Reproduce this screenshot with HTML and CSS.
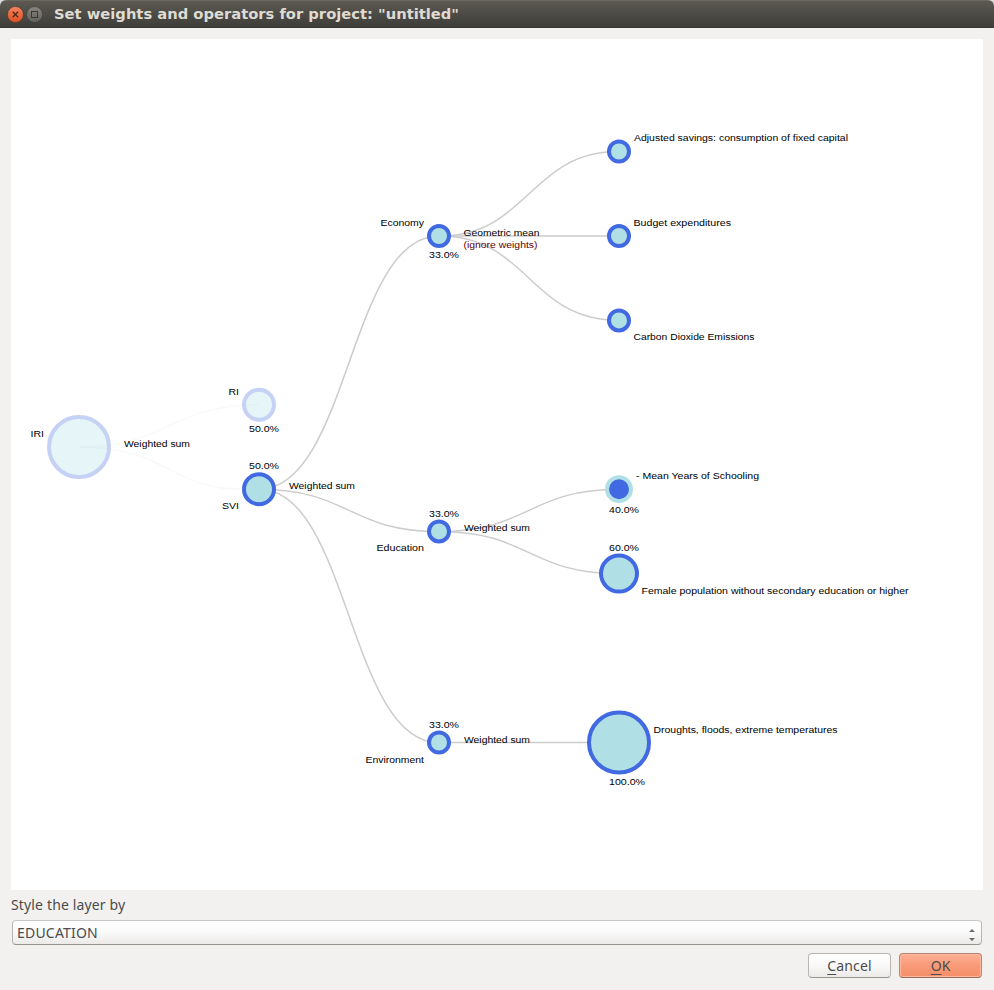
FILE: index.html
```html
<!DOCTYPE html>
<html lang="en">
<head>
<meta charset="utf-8">
<title>Set weights and operators</title>
<link rel="stylesheet" href="styles.css">
</head>
<body>
<div class="dialog">
  <header class="titlebar">
    <svg class="controls" width="40" height="20" viewBox="0 0 40 20" aria-hidden="true">
      <defs>
        <linearGradient id="close" x1="0" y1="0" x2="0" y2="1"><stop offset="0" stop-color="#f58562"/><stop offset="1" stop-color="#e0501f"/></linearGradient>
        <linearGradient id="max" x1="0" y1="0" x2="0" y2="1"><stop offset="0" stop-color="#87857d"/><stop offset="1" stop-color="#62605a"/></linearGradient>
      </defs>
      <circle cx="10.4" cy="10.5" r="8" fill="url(#close)" stroke="#393732" stroke-width=".6"/>
      <path d="M7.7 7.8l5.4 5.4M13.1 7.8l-5.4 5.4" fill="none" stroke="#4b2a1c" stroke-width="1.3"/>
      <circle cx="29.6" cy="10.5" r="8" fill="url(#max)" stroke="#393732" stroke-width=".6"/>
      <rect x="26.5" y="7.5" width="6" height="6" fill="none" stroke="#393833"/>
    </svg>
    <svg class="title" width="420" height="24"><text x="0" y="15" textLength="405" lengthAdjust="spacingAndGlyphs">Set weights and operators for project: "untitled"</text></svg>
  </header>
  <main class="canvas">
    <svg class="tree" width="972" height="851" viewBox="11 39 972 851">
      <g class="links">
        <path d="M259 489.3C349 489.3 349 236 439 236"/>
        <path d="M259 489.3C349 489.3 349 531.5 439 531.5"/>
        <path d="M259 489.3C349 489.3 349 742.6 439 742.6"/>
        <path d="M439 236C529 236 529 151.6 619 151.6"/>
        <path d="M439 236H619"/>
        <path d="M439 236C529 236 529 320.4 619 320.4"/>
        <path d="M439 531.5C529 531.5 529 489.3 619 489.3"/>
        <path d="M439 531.5C529 531.5 529 573.7 619 573.7"/>
        <path d="M439 742.6H619"/>
      </g>
      <g class="nodes">
        <circle class="faded" cx="79" cy="447" r="30"/>
        <circle class="faded" cx="259" cy="404.8" r="15"/>
        <circle cx="259" cy="489.2" r="15"/>
        <circle cx="439" cy="236" r="10"/>
        <circle cx="439" cy="531.4" r="10"/>
        <circle cx="439" cy="742.5" r="10"/>
        <circle cx="619" cy="151.5" r="10"/>
        <circle cx="619" cy="236" r="10"/>
        <circle cx="619" cy="320.4" r="10"/>
        <circle class="inverted" cx="619" cy="489.2" r="12"/>
        <circle cx="619" cy="573.6" r="18"/>
        <circle cx="619" cy="742.5" r="30"/>
      </g>
      <g class="links ghost">
        <path d="M79 447C169 447 169 404.8 259 404.8"/>
        <path d="M79 447C169 447 169 489.2 243 489.2"/>
      </g>
      <g class="labels">
        <text x="30.5" y="437" textLength="13.5" lengthAdjust="spacingAndGlyphs">IRI</text>
        <text x="124" y="447" textLength="66" lengthAdjust="spacingAndGlyphs">Weighted sum</text>
        <text x="228.5" y="395" textLength="10.5" lengthAdjust="spacingAndGlyphs">RI</text>
        <text x="249" y="432" textLength="30" lengthAdjust="spacingAndGlyphs">50.0%</text>
        <text x="249" y="469" textLength="30" lengthAdjust="spacingAndGlyphs">50.0%</text>
        <text x="222" y="509" textLength="17" lengthAdjust="spacingAndGlyphs">SVI</text>
        <text x="289" y="489" textLength="66" lengthAdjust="spacingAndGlyphs">Weighted sum</text>
        <text x="380.5" y="226" textLength="43.5" lengthAdjust="spacingAndGlyphs">Economy</text>
        <text x="429" y="258" textLength="30" lengthAdjust="spacingAndGlyphs">33.0%</text>
        <text x="463.5" y="236" textLength="76" lengthAdjust="spacingAndGlyphs">Geometric mean</text>
        <text class="note" x="463.5" y="248" textLength="74" lengthAdjust="spacingAndGlyphs">(ignore weights)</text>
        <text x="429" y="517" textLength="30" lengthAdjust="spacingAndGlyphs">33.0%</text>
        <text x="376.5" y="551" textLength="47.5" lengthAdjust="spacingAndGlyphs">Education</text>
        <text x="464" y="531" textLength="66" lengthAdjust="spacingAndGlyphs">Weighted sum</text>
        <text x="429" y="728" textLength="30" lengthAdjust="spacingAndGlyphs">33.0%</text>
        <text x="365.5" y="763" textLength="58.5" lengthAdjust="spacingAndGlyphs">Environment</text>
        <text x="464" y="743" textLength="66" lengthAdjust="spacingAndGlyphs">Weighted sum</text>
        <text x="634" y="141" textLength="214" lengthAdjust="spacingAndGlyphs">Adjusted savings: consumption of fixed capital</text>
        <text x="633.5" y="226" textLength="97.5" lengthAdjust="spacingAndGlyphs">Budget expenditures</text>
        <text x="633.5" y="340" textLength="121" lengthAdjust="spacingAndGlyphs">Carbon Dioxide Emissions</text>
        <text x="636" y="479" textLength="123" lengthAdjust="spacingAndGlyphs">- Mean Years of Schooling</text>
        <text x="609" y="513" textLength="30" lengthAdjust="spacingAndGlyphs">40.0%</text>
        <text x="609" y="551" textLength="30" lengthAdjust="spacingAndGlyphs">60.0%</text>
        <text x="641.5" y="594" textLength="267" lengthAdjust="spacingAndGlyphs">Female population without secondary education or higher</text>
        <text x="653.5" y="733" textLength="184" lengthAdjust="spacingAndGlyphs">Droughts, floods, extreme temperatures</text>
        <text x="609" y="785" textLength="36" lengthAdjust="spacingAndGlyphs">100.0%</text>
      </g>
    </svg>
  </main>
  <footer class="controls-panel">
    <label class="caption">Style the layer by</label>
    <div class="select">
      <span class="value">EDUCATION</span>
      <svg class="arrows" width="6" height="12" viewBox="0 0 6 12"><path d="M0 3L3 0l3 3zM0 9h6l-3 3z" fill="#6b6b6b"/></svg>
    </div>
    <div class="buttons">
      <button class="button"><span class="cancel"><u>C</u>ancel</span></button>
      <button class="button primary"><span><u>O</u>K</span></button>
    </div>
  </footer>
</div>
</body>
</html>
```

FILE: styles.css
```css
* { box-sizing: border-box; }
body {
  margin: 0;
  background: #d8d8d8;
  color: #4c4c4c;
  font: 14px/20px "Noto Sans", "Open Sans", sans-serif;
}
.dialog {
  width: 994px;
  height: 990px;
  overflow: hidden;
  background: #f2f1f0;
  border-radius: 6px 6px 0 0;
  display: flex;
  flex-direction: column;
}
.titlebar {
  flex: none;
  height: 28px;
  padding: 4px 0 0 5px;
  display: flex;
  gap: 9px;
  background: linear-gradient(#5b5951, #3e3d39);
  border-top: 1px solid #6a675e;
  border-bottom: 1px solid #3a3935;
}
.controls { flex: none; margin-top: -1px; }
.title { overflow: visible; margin-top: -1px; }
.title text {
  font: bold 14px "DejaVu Sans", sans-serif;
  fill: #dfdbd2;
}
.canvas {
  flex: none;
  height: 851px;
  margin: 11px 11px 0;
  background: #fff;
}
.tree { display: block; }
.links path { fill: none; stroke: #ccc; stroke-width: 1.5; }
.ghost { opacity: .1; }
.nodes circle { fill: #b0e0e6; stroke: #4169e1; stroke-width: 4; }
.nodes .faded { opacity: .3; }
.nodes .inverted { fill: #4169e1; stroke: #b0e0e6; }
.labels text { font: 9.6px "Liberation Sans", Arial, sans-serif; fill: #000; }
.labels .note { fill: #660000; }
.controls-panel {
  padding: 5px 12px 0;
  display: flex;
  flex-direction: column;
}
.caption { margin-left: -1px; letter-spacing: .15px; }
.select {
  margin-top: 5px;
  height: 25px;
  padding: 0 6px 0 4px;
  display: flex;
  align-items: center;
  justify-content: space-between;
  background: linear-gradient(#fff, #f9f9f9 50%, #ebeae8);
  border: 1px solid #b9b6b2;
  border-top-color: #c9c6c3;
  border-bottom-color: #98958f;
  border-radius: 4px;
}
.value { letter-spacing: .2px; }
.arrows { margin-top: 4px; }
.buttons {
  margin-top: 8px;
  display: flex;
  justify-content: flex-end;
  gap: 8px;
}
.button {
  width: 83px;
  height: 25px;
  padding: 0;
  font: inherit;
  color: inherit;
  background: linear-gradient(#fff, #f9f9f9 50%, #ebeae8);
  border: 1px solid #b9b6b2;
  border-bottom-color: #98958f;
  border-radius: 4px;
}
.cancel { letter-spacing: .15px; }
.button u { text-underline-offset: 3px; text-decoration-thickness: 1px; }
.primary {
  background: linear-gradient(#ffb195, #f89a78 50%, #f58f6a);
  border-color: #b98471;
  border-bottom-color: #9b6753;
  box-shadow: inset 0 0 0 1px #ffb99f;
}
```
